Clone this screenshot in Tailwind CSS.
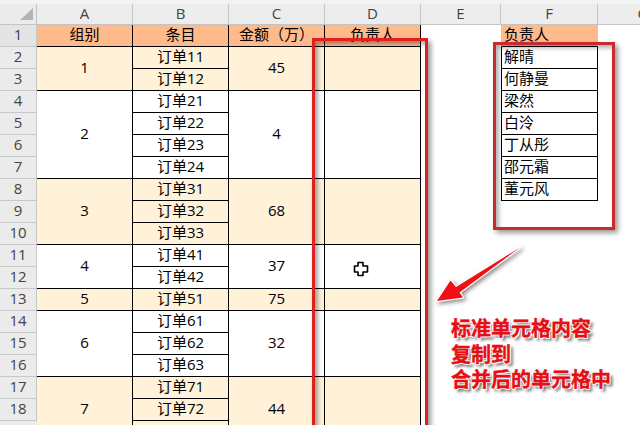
<!DOCTYPE html>
<html lang="zh">
<head>
<meta charset="utf-8">
<script src="https://cdn.jsdelivr.net/npm/@tailwindcss/browser@4"></script>
</head>
<body class="bg-white">
<div class="relative w-[640px] h-[425px] overflow-hidden bg-white text-[15px] text-black font-['Open_Sans','Noto_Sans_CJK_SC',sans-serif]">
  <div class="h-[4px] bg-[#f3f3f3]"></div>
  <div class="flex w-[740px]">
    <!-- row headers -->
    <div class="flex flex-col w-[37px] shrink-0 bg-[#ebebeb] text-[#444] text-center">
      <div class="relative h-[21px] border-r border-b border-[#c4c4c4]">
        <svg class="absolute left-[20px] top-[4px]" width="13" height="13" viewBox="0 0 13 13"><polygon points="13,0 13,12 0,12" fill="#b4b4b4"/></svg>
      </div>
      <div class="h-[22px] leading-[19px] border-r border-b border-[#c8c8c8] bg-[#e4e4e4]">1</div>
      <div class="h-[22px] leading-[19px] border-r border-b border-[#c8c8c8]">2</div>
      <div class="h-[22px] leading-[19px] border-r border-b border-[#c8c8c8]">3</div>
      <div class="h-[22px] leading-[19px] border-r border-b border-[#c8c8c8]">4</div>
      <div class="h-[22px] leading-[19px] border-r border-b border-[#c8c8c8]">5</div>
      <div class="h-[22px] leading-[19px] border-r border-b border-[#c8c8c8]">6</div>
      <div class="h-[22px] leading-[19px] border-r border-b border-[#c8c8c8]">7</div>
      <div class="h-[22px] leading-[19px] border-r border-b border-[#c8c8c8]">8</div>
      <div class="h-[22px] leading-[19px] border-r border-b border-[#c8c8c8]">9</div>
      <div class="h-[22px] leading-[19px] border-r border-b border-[#c8c8c8]">10</div>
      <div class="h-[22px] leading-[19px] border-r border-b border-[#c8c8c8]">11</div>
      <div class="h-[22px] leading-[19px] border-r border-b border-[#c8c8c8]">12</div>
      <div class="h-[22px] leading-[19px] border-r border-b border-[#c8c8c8]">13</div>
      <div class="h-[22px] leading-[19px] border-r border-b border-[#c8c8c8]">14</div>
      <div class="h-[22px] leading-[19px] border-r border-b border-[#c8c8c8]">15</div>
      <div class="h-[22px] leading-[19px] border-r border-b border-[#c8c8c8]">16</div>
      <div class="h-[22px] leading-[19px] border-r border-b border-[#c8c8c8]">17</div>
      <div class="h-[22px] leading-[19px] border-r border-b border-[#c8c8c8]">18</div>
    </div>
    <!-- A -->
    <div class="flex flex-col w-[96px] shrink-0 text-center">
      <div class="h-[21px] leading-[18px] bg-[#ededed] text-[#444] border-r border-b border-[#c4c4c4]">A</div>
      <div class="h-[22px] leading-[19px] bg-[#ffba8c] border-r border-b border-black">组别</div>
      <div class="h-[44px] pb-[2px] flex items-center justify-center bg-[#fff2d9] border-r border-b border-black">1</div>
      <div class="h-[88px] pb-[2px] flex items-center justify-center bg-white border-r border-b border-black">2</div>
      <div class="h-[66px] pb-[2px] flex items-center justify-center bg-[#fff2d9] border-r border-b border-black">3</div>
      <div class="h-[44px] pb-[2px] flex items-center justify-center bg-white border-r border-b border-black">4</div>
      <div class="h-[22px] pb-[2px] flex items-center justify-center bg-[#fff2d9] border-r border-b border-black">5</div>
      <div class="h-[66px] pb-[2px] flex items-center justify-center bg-white border-r border-b border-black">6</div>
      <div class="h-[66px] pb-[2px] flex items-center justify-center bg-[#fff2d9] border-r border-b border-black">7</div>
    </div>
    <!-- B -->
    <div class="flex flex-col w-[96px] shrink-0 text-center">
      <div class="h-[21px] leading-[18px] bg-[#ededed] text-[#444] border-r border-b border-[#c4c4c4]">B</div>
      <div class="h-[22px] leading-[19px] bg-[#ffba8c] border-r border-b border-black">条目</div>
      <div class="h-[22px] leading-[19px] bg-[#fff2d9] border-r border-b border-black">订单11</div>
      <div class="h-[22px] leading-[19px] bg-[#fff2d9] border-r border-b border-black">订单12</div>
      <div class="h-[22px] leading-[19px] bg-white border-r border-b border-black">订单21</div>
      <div class="h-[22px] leading-[19px] bg-white border-r border-b border-black">订单22</div>
      <div class="h-[22px] leading-[19px] bg-white border-r border-b border-black">订单23</div>
      <div class="h-[22px] leading-[19px] bg-white border-r border-b border-black">订单24</div>
      <div class="h-[22px] leading-[19px] bg-[#fff2d9] border-r border-b border-black">订单31</div>
      <div class="h-[22px] leading-[19px] bg-[#fff2d9] border-r border-b border-black">订单32</div>
      <div class="h-[22px] leading-[19px] bg-[#fff2d9] border-r border-b border-black">订单33</div>
      <div class="h-[22px] leading-[19px] bg-white border-r border-b border-black">订单41</div>
      <div class="h-[22px] leading-[19px] bg-white border-r border-b border-black">订单42</div>
      <div class="h-[22px] leading-[19px] bg-[#fff2d9] border-r border-b border-black">订单51</div>
      <div class="h-[22px] leading-[19px] bg-white border-r border-b border-black">订单61</div>
      <div class="h-[22px] leading-[19px] bg-white border-r border-b border-black">订单62</div>
      <div class="h-[22px] leading-[19px] bg-white border-r border-b border-black">订单63</div>
      <div class="h-[22px] leading-[19px] bg-[#fff2d9] border-r border-b border-black">订单71</div>
      <div class="h-[22px] leading-[19px] bg-[#fff2d9] border-r border-b border-black">订单72</div>
      <div class="h-[22px] bg-[#fff2d9] border-r border-b border-black"></div>
    </div>
    <!-- C -->
    <div class="flex flex-col w-[96px] shrink-0 text-center">
      <div class="h-[21px] leading-[18px] bg-[#ededed] text-[#444] border-r border-b border-[#c4c4c4]">C</div>
      <div class="h-[22px] leading-[19px] bg-[#ffba8c] border-r border-b border-black">金额（万）</div>
      <div class="h-[44px] pb-[2px] flex items-center justify-center bg-[#fff2d9] border-r border-b border-black">45</div>
      <div class="h-[88px] pb-[2px] flex items-center justify-center bg-white border-r border-b border-black">4</div>
      <div class="h-[66px] pb-[2px] flex items-center justify-center bg-[#fff2d9] border-r border-b border-black">68</div>
      <div class="h-[44px] pb-[2px] flex items-center justify-center bg-white border-r border-b border-black">37</div>
      <div class="h-[22px] pb-[2px] flex items-center justify-center bg-[#fff2d9] border-r border-b border-black">75</div>
      <div class="h-[66px] pb-[2px] flex items-center justify-center bg-white border-r border-b border-black">32</div>
      <div class="h-[66px] pb-[2px] flex items-center justify-center bg-[#fff2d9] border-r border-b border-black">44</div>
    </div>
    <!-- D -->
    <div class="flex flex-col w-[96px] shrink-0 text-center">
      <div class="h-[21px] leading-[18px] bg-[#ededed] text-[#444] border-r border-b border-[#c4c4c4]">D</div>
      <div class="h-[22px] leading-[19px] bg-[#ffba8c] border-r border-b border-black">负责人</div>
      <div class="h-[44px] bg-[#fff2d9] border-r border-b border-black"></div>
      <div class="h-[88px] bg-white border-r border-b border-black"></div>
      <div class="h-[66px] bg-[#fff2d9] border-r border-b border-black"></div>
      <div class="h-[44px] bg-white border-r border-b border-black"></div>
      <div class="h-[22px] bg-[#fff2d9] border-r border-b border-black"></div>
      <div class="h-[66px] bg-white border-r border-b border-black"></div>
      <div class="h-[66px] bg-[#fff2d9] border-r border-b border-black"></div>
    </div>
    <!-- E -->
    <div class="flex flex-col w-[80px] shrink-0 text-center">
      <div class="h-[21px] leading-[18px] bg-[#ededed] text-[#444] border-r border-b border-[#c4c4c4]">E</div>
    </div>
    <!-- F -->
    <div class="flex flex-col w-[97px] shrink-0">
      <div class="h-[21px] leading-[18px] text-center bg-[#ededed] text-[#444] border-r border-b border-[#c4c4c4]">F</div>
      <div class="h-[22px] leading-[19px] pl-[2px] bg-[#ffba8c] border-x border-b border-x-[#ffba8c] border-b-black">负责人</div>
      <div class="h-[22px] leading-[19px] pl-[2px] border-x border-b border-black">解晴</div>
      <div class="h-[22px] leading-[19px] pl-[2px] border-x border-b border-black">何静曼</div>
      <div class="h-[22px] leading-[19px] pl-[2px] border-x border-b border-black">梁然</div>
      <div class="h-[22px] leading-[19px] pl-[2px] border-x border-b border-black">白泠</div>
      <div class="h-[22px] leading-[19px] pl-[2px] border-x border-b border-black">丁从彤</div>
      <div class="h-[22px] leading-[19px] pl-[2px] border-x border-b border-black">邵元霜</div>
      <div class="h-[22px] leading-[19px] pl-[2px] border-x border-b border-black">董元风</div>
    </div>
    <!-- G -->
    <div class="flex flex-col w-[90px] shrink-0 text-center">
      <div class="h-[21px] leading-[18px] bg-[#ededed] text-[#444] border-b border-[#c4c4c4]">G</div>
    </div>
  </div>

  <!-- annotations over the sheet -->
  <div class="absolute left-[312px] top-[38px] w-[116px] h-[420px] border-[3px] border-[#e01f1f] shadow-[3px_3px_5px_rgba(0,0,0,0.4),inset_3px_3px_4px_rgba(0,0,0,0.35)]"></div>
  <div class="absolute left-[493px] top-[42px] w-[122px] h-[188px] border-[3px] border-[#c92a2e] shadow-[3px_3px_5px_rgba(0,0,0,0.4),inset_3px_3px_4px_rgba(0,0,0,0.3)]"></div>

  <svg class="absolute left-[352px] top-[260px]" width="18" height="18" viewBox="0 0 18 18">
    <path d="M6 2.500h5v3.500h4.500v6H11v3.500H6V12H2.500V6H6z" fill="#fff" stroke="#000" stroke-width="1.600" stroke-linejoin="round"/>
  </svg>

  <svg class="absolute left-[430px] top-[240px] drop-shadow-[2px_2px_2px_rgba(0,0,0,0.45)]" width="100" height="70" viewBox="0 0 100 70">
    <polygon class="[paint-order:stroke]" points="7,61 20.500,40.500 26,47 90,7.500 29.500,52.500 33,57.500" fill="#f00f14" stroke="#fff" stroke-width="2.500" stroke-linejoin="round"/>
  </svg>

  <div class="absolute left-[451px] top-[316px] text-[20px] leading-[25.500px] font-bold text-[#e60f14] whitespace-nowrap [-webkit-text-stroke:0.4px_#e60f14] [text-shadow:-1px_-1px_0_#fff,1px_-1px_0_#fff,-1px_1px_0_#fff,1px_1px_0_#fff,3px_3px_3px_rgba(0,0,0,0.6)]">
    <p>标准单元格内容</p>
    <p>复制到</p>
    <p>合并后的单元格中</p>
  </div>
</div>
</body>
</html>
